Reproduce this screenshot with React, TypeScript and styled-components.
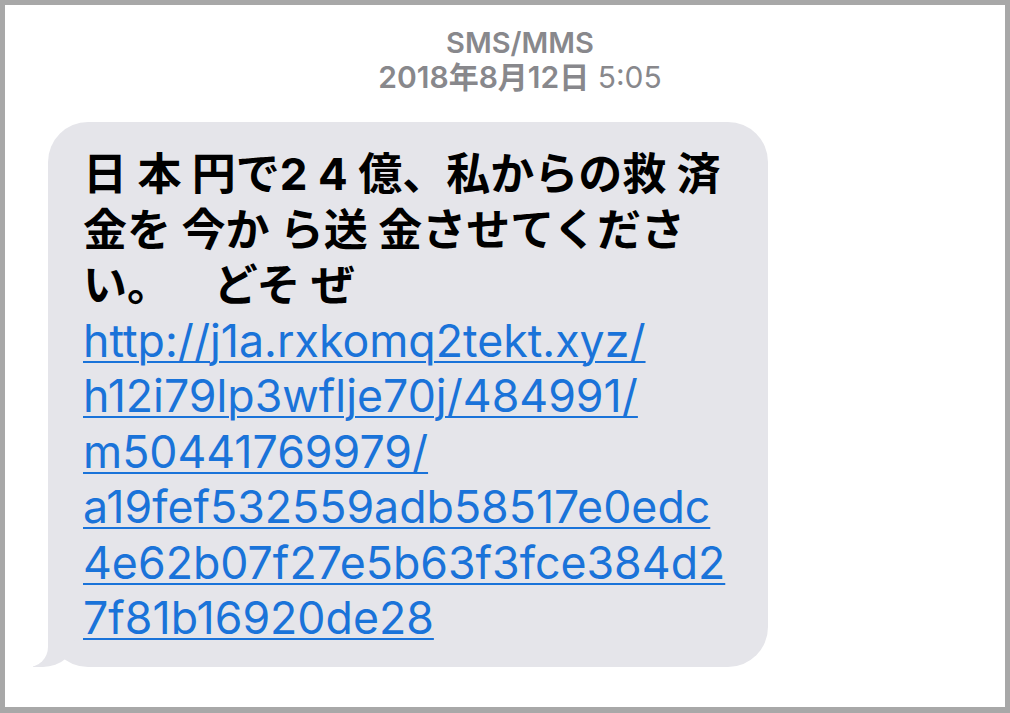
import React from 'react'

import styled, { createGlobalStyle } from 'styled-components'

const GlobalStyle = createGlobalStyle`
  html, body {
    margin: 0;
    padding: 0;
    background: #ffffff;
  }
`

const Frame = styled.div`
  box-sizing: border-box;
  width: 1010px;
  height: 713px;
  border: 5px solid #a8a8a8;
  border-bottom-width: 6px;
  background: #ffffff;
  display: flex;
  flex-direction: column;
  overflow: hidden;
`

const Header = styled.header`
  display: flex;
  flex-direction: column;
  align-items: center;
  padding: 20px 0 0 30px;
  font-family: Inter, 'Noto Sans CJK JP', sans-serif;
  font-size: 30px;
  line-height: 35px;
  color: #88888c;
`

const Service = styled.div`
  font-weight: 600;
  font-size: 29px;
`

const Stamp = styled.div`
  font-weight: 400;

  b {
    font-weight: 600;
  }
`

const Bubble = styled.div`
  --bubble-bg: #e5e5ea;

  position: relative;
  align-self: flex-start;
  box-sizing: border-box;
  width: 720px;
  margin: 27px 0 0 43px;
  padding: 25px 0 20px 35px;
  border-radius: 40px;
  background: var(--bubble-bg);

  &::before,
  &::after {
    content: '';
    position: absolute;
    bottom: 0;
    height: 50px;
  }

  &::before {
    left: -15px;
    width: 42px;
    background: var(--bubble-bg);
    border-bottom-right-radius: 32px 28px;
  }

  &::after {
    left: -54px;
    width: 54px;
    background: #ffffff;
    border-bottom-right-radius: 20px;
  }
`

const Body = styled.p`
  margin: 0;
  white-space: pre;
  font-family: Inter, 'Noto Sans CJK JP', sans-serif;
  font-size: 44px;
  line-height: 55.5px;
  font-weight: 700;
  color: #000000;
`

const Link = styled.a`
  display: block;
  white-space: pre;
  font-family: Inter, 'Noto Sans CJK JP', sans-serif;
  font-size: 44.7px;
  line-height: 55.5px;
  font-weight: 400;
  color: #1a73d9;
  text-decoration: underline;
  text-decoration-thickness: 2px;
  text-underline-offset: 4px;
`

const LinkLine = styled.span`
  display: block;
`

const messageLines = ['日 本 円で2 4 億、私からの救 済', '金を 今か ら送 金させてくださ', 'い。　  どそ ぜ']

const urlLines = [
  'http://j1a.rxkomq2tekt.xyz/',
  'h12i79lp3wflje70j/484991/',
  'm50441769979/',
  'a19fef532559adb58517e0edc',
  '4e62b07f27e5b63f3fce384d2',
  '7f81b16920de28',
]

export default function App() {
  return (
    <>
      <GlobalStyle />
      <Frame>
        <Header>
          <Service>SMS/MMS</Service>
          <Stamp>
            <b>2018年8月12日</b> 5:05
          </Stamp>
        </Header>
        <Bubble>
          <Body>{messageLines.join('\n')}</Body>
          <Link href='#'>
            {urlLines.map((line) => (
              <LinkLine key={line}>{line}</LinkLine>
            ))}
          </Link>
        </Bubble>
      </Frame>
    </>
  )
}
